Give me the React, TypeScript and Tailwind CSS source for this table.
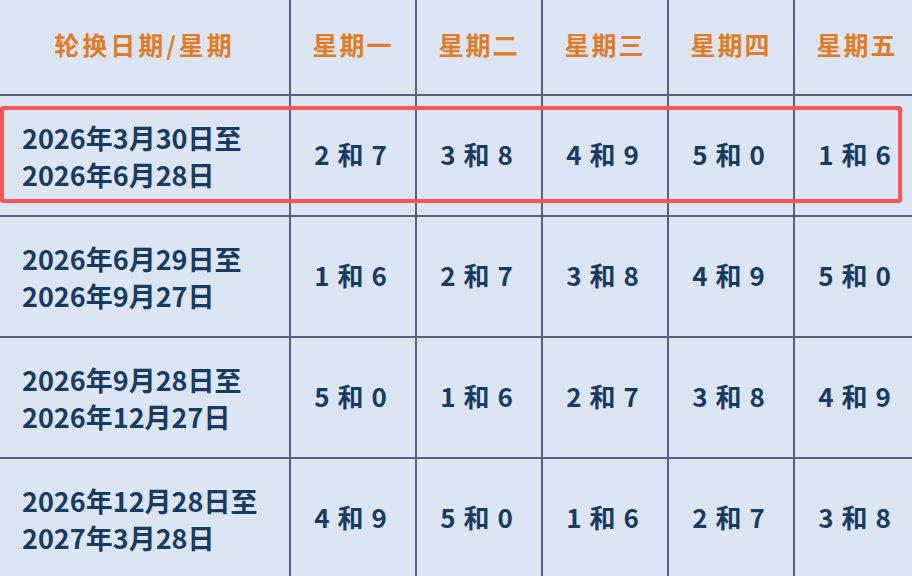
import React from "react";

const days = ["星期一", "星期二", "星期三", "星期四", "星期五"];

const rows = [
  { from: "2026年3月30日至", to: "2026年6月28日", pairs: ["2 和 7", "3 和 8", "4 和 9", "5 和 0", "1 和 6"] },
  { from: "2026年6月29日至", to: "2026年9月27日", pairs: ["1 和 6", "2 和 7", "3 和 8", "4 和 9", "5 和 0"] },
  { from: "2026年9月28日至", to: "2026年12月27日", pairs: ["5 和 0", "1 和 6", "2 和 7", "3 和 8", "4 和 9"] },
  { from: "2026年12月28日至", to: "2027年3月28日", pairs: ["4 和 9", "5 和 0", "1 和 6", "2 和 7", "3 和 8"] },
];

const font = { fontFamily: '"Noto Sans CJK SC", "Noto Sans", sans-serif' };

export default function App() {
  return (
    <div className="relative w-[912px] h-[576px] overflow-hidden bg-[#dce5f3]" style={font}>
      <div className="grid grid-cols-[291px_126px_126px_126px_126px_126px] w-[921px]">
        {/* header */}
        <div className="h-[96px] border-r-2 border-b-2 border-[#56627a] flex items-center justify-center pb-[4px] text-[25px] font-bold tracking-[3px] text-[#e17b26]">
          轮换日期/星期
        </div>
        {days.map((d) => (
          <div
            key={d}
            className="h-[96px] border-r-2 border-b-2 border-[#56627a] flex items-center justify-center pb-[4px] text-[25px] font-bold tracking-[2px] text-[#e17b26]"
          >
            {d}
          </div>
        ))}

        {rows.map((r) => (
          <React.Fragment key={r.from}>
            <div className="h-[121px] border-r-2 border-b-2 border-[#56627a] flex flex-col justify-center pl-[22px] text-[27px] leading-[37px] font-bold text-[#173c64]">
              <span>{r.from}</span>
              <span>{r.to}</span>
            </div>
            {r.pairs.map((p, i) => (
              <div
                key={i}
                className="h-[121px] border-r-2 border-b-2 border-[#56627a] flex items-center justify-center pr-[4px] pb-[4px] text-[26px] tracking-[1px] font-bold text-[#173c64] whitespace-pre"
              >
                {p}
              </div>
            ))}
          </React.Fragment>
        ))}
      </div>

      {/* highlight box over the first row */}
      <div className="absolute left-0 top-[106px] w-[902px] h-[97px] border-4 border-[#ff5454] rounded-[3px]" />
    </div>
  );
}
